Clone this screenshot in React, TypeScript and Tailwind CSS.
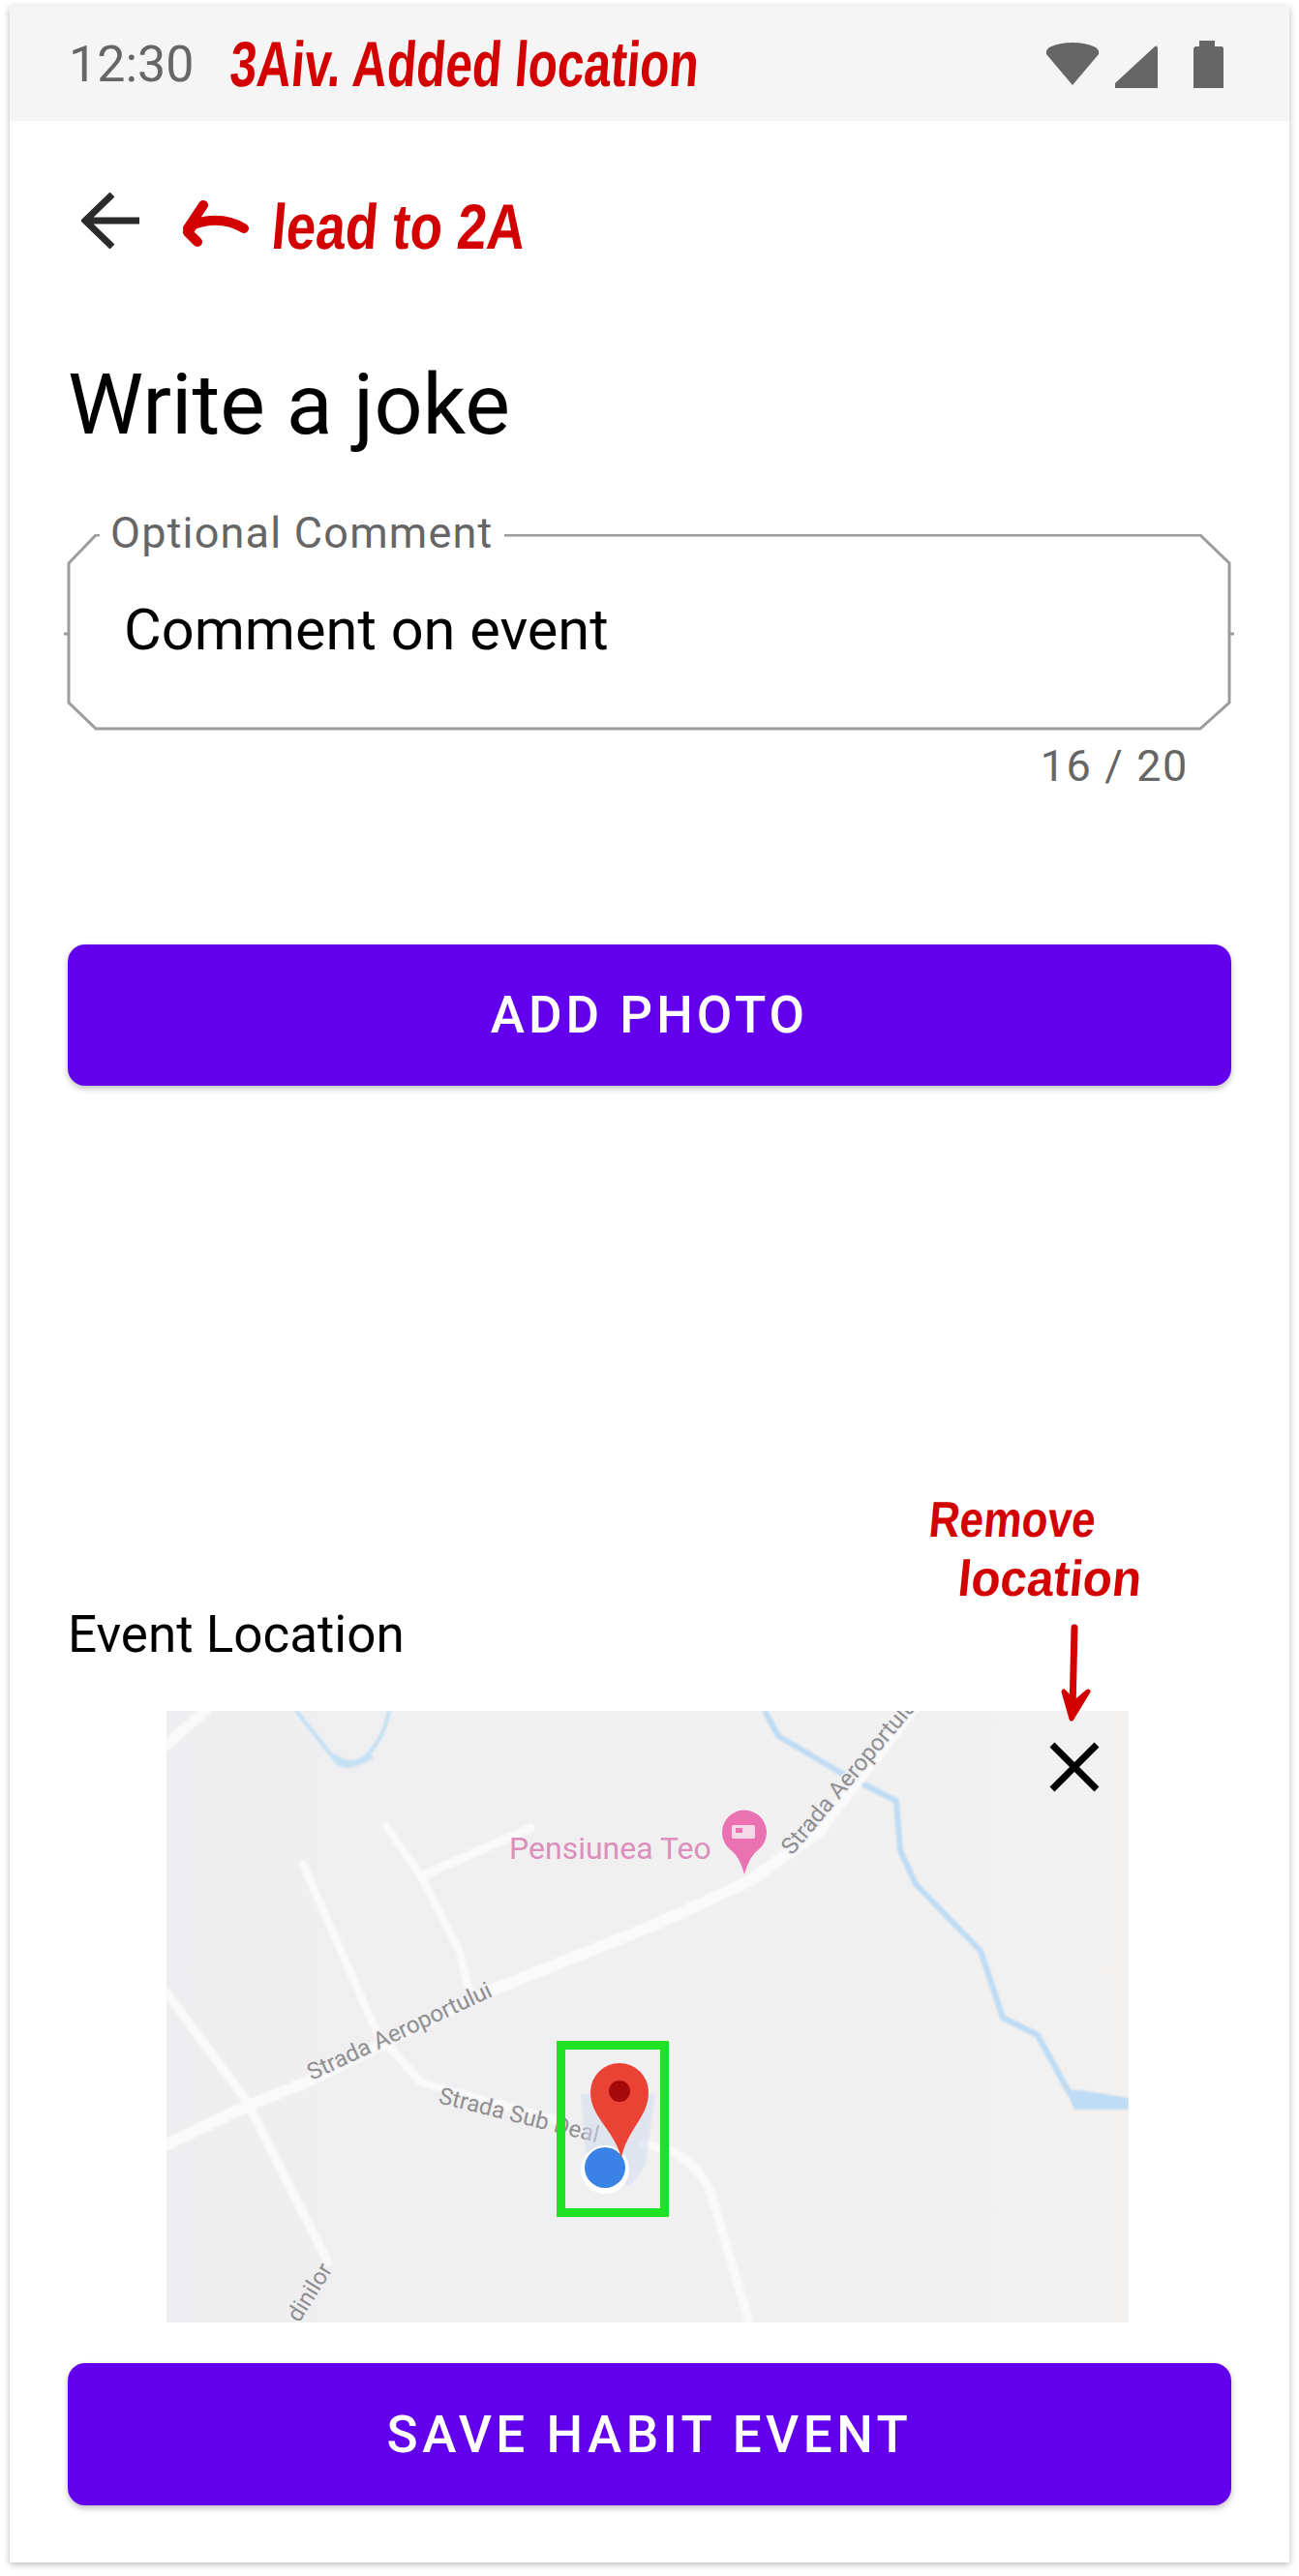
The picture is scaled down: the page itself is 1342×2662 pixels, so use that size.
import React from "react";

function Map() {
  const road = "none";
  return (
    <svg width="994" height="632" viewBox="0 0 994 632" className="block">
      <defs>
        <linearGradient id="mapbg" x1="0" y1="0" x2="1" y2="0">
          <stop offset="0" stopColor="#eeeef0" />
          <stop offset="0.5" stopColor="#f1f0f1" />
          <stop offset="1" stopColor="#f2f1f0" />
        </linearGradient>
        <filter id="soft" x="-5%" y="-5%" width="110%" height="110%">
          <feGaussianBlur stdDeviation="1" />
        </filter>
      </defs>
      <rect width="994" height="632" fill="url(#mapbg)" />
      {/* water */}
      <g filter="url(#soft)">
        <path d="M134 0 L177 54 Q188 60 197 54 Q222 38 230 0" fill={road} stroke="#c4e0f5" strokeWidth="4" />
        <path d="M172 46 Q188 62 212 46" fill={road} stroke="#c4e0f5" strokeWidth="6" />
        <path d="M618 0 L632 26 L695 63 L754 93 L758 144 L774 179 L841 248 L864 317 L900 335 L934 397" fill={road} stroke="#bedcf4" strokeWidth="6" strokeLinejoin="round" />
        <path d="M929 392 L938 412 L994 412 L994 400 L945 392 Z" fill="#bedcf4" />
      </g>
      {/* roads */}
      <g fill={road} stroke="#fafafa" strokeLinecap="round" strokeLinejoin="round" filter="url(#soft)">
        <path d="M-4 450 L84 408 L144 384 L330 291 L509 219 L602 176 L675 124 L775 -8" strokeWidth="12" />
        <path d="M-2 37 L44 -4" strokeWidth="11" />
        <path d="M141 158 L217 332 L263 384 L403 423" strokeWidth="8" />
        <path d="M492 447 L522 455 Q550 470 562 497 L602 632" strokeWidth="9" />
        <path d="M227 119 L263 171 L303 249 L313 291" strokeWidth="8" />
        <path d="M263 171 L376 121" strokeWidth="9" />
        <path d="M0 291 L84 405 L167 570" strokeWidth="9" />
      </g>
      {/* labels */}
      <g fontFamily="Roboto, sans-serif" fill="#8f8f92" fontSize="24">
        <text transform="translate(150 382) rotate(-25)" stroke="#f1f0f1" strokeWidth="3" paintOrder="stroke">Strada Aeroportului</text>
        <text transform="translate(646 150) rotate(-50)" stroke="#f1f0f1" strokeWidth="3" paintOrder="stroke">Strada Aeroportului</text>
        <text transform="translate(280 405) rotate(14)" stroke="#f1f0f1" strokeWidth="3" paintOrder="stroke">Strada Sub Deal</text>
        <text transform="translate(172 577) rotate(-58)" textAnchor="end" stroke="#f1f0f1" strokeWidth="3" paintOrder="stroke">dinilor</text>
      </g>
      <text x="354" y="153" fontFamily="Roboto, sans-serif" fontSize="32" fill="#dc8fbb">Pensiunea Teo</text>
      <path d="M597 169 Q592 150 582 143 A23 23 0 1 1 612 143 Q602 150 597 169 Z" fill="#ea72b2" />
      <rect x="584" y="118" width="24" height="14" rx="2" fill="#f6d9e9" />
      <rect x="588" y="121" width="7" height="5" fill="#ea72b2" />
      {/* marker */}
      <path d="M428 396 L505 396 L495 470 L480 490 L436 490 Z" fill="#d3dcef" opacity="0.55" filter="url(#soft)" />
      <circle cx="453" cy="474" r="25" fill="#ffffff" />
      <circle cx="453" cy="472" r="21" fill="#3b82e6" />
      <path d="M470 462 C462 432 438 420 438 394 A30 30 0 0 1 498 394 C498 420 476 432 470 462 Z" fill="#ea4335" />
      <circle cx="468" cy="393" r="11" fill="#a50a0a" />
      <rect x="407.500" y="345.500" width="107" height="173" fill="none" stroke="#1fe224" strokeWidth="9" />
      {/* remove */}
      <path d="M915 35 L961 81 M961 35 L915 81" stroke="#000" strokeWidth="7" />
    </svg>
  );
}

function Note({ className, children }: { className: string; children: React.ReactNode }) {
  return (
    <span
      className={
        "absolute whitespace-nowrap origin-left font-bold text-[#d20000] font-['Liberation_Sans',sans-serif] " +
        className
      }
    >
      {children}
    </span>
  );
}

export default function App() {
  return (
    <div className="relative w-[1342px] h-[2662px] bg-white font-['Roboto',sans-serif] overflow-hidden">
      <div className="ml-[10px] mt-[6px] w-[1322px] bg-white shadow-[0_2px_7px_rgba(0,0,0,0.28)] flex flex-col">
        {/* status bar */}
        <div className="h-[119px] bg-[#f5f5f5] flex items-start pl-[61px] pr-[68px]">
          <span className="mt-[31px] text-[52px] leading-[60px] text-[#666666]">12:30</span>
          <svg width="184" height="50" viewBox="0 0 184 50" className="ml-auto mt-[36px]" fill="#666666">
            <path d="M1 12 Q0 8 4 5 Q14 0 28 0 Q42 0 52 5 Q56 8 55 12 L28 44 Z" transform="translate(0 2)" />
            <path d="M116 49 L72 49 L72 44 L112 7 Q116 3 116 9 Z" />
            <path d="M159 0 H175 V6 H182 Q184 6 184 9 V49 H153 V9 Q153 6 156 6 H159 Z" />
          </svg>
        </div>

        <div className="flex flex-col pl-[60px] pr-[60px] pb-[59px]">
          {/* toolbar */}
          <div className="mt-[74px] h-[58px] flex">
            <svg width="60" height="58" viewBox="0 0 60 58" className="ml-[14px]" fill="none" stroke="#2b2b2b" strokeWidth="7">
              <path d="M4 29 H60 M32 2 L4 29 L32 56" />
            </svg>
          </div>

          <h1 className="mt-[111px] h-[100px] text-[88px] leading-[100px] font-normal text-black">Write a joke</h1>

          {/* text field */}
          <div className="relative mt-[85px] h-[202px]">
            <svg width="1210" height="204" viewBox="0 0 1210 204" className="absolute left-[-4px] top-[-1px]" fill="none" stroke="#9c9c9c" strokeWidth="3">
              <path d="M33 1 H1174 L1204 30 V174 L1174 201 H33 L5 174 V30 Z" />
              <path d="M0 103 H5 M1204 103 H1209" />
            </svg>
            <span className="absolute left-[33px] top-[-27px] px-[11px] bg-white text-[45px] leading-[50px] tracking-[1.2px] text-[#666666]">
              Optional Comment
            </span>
            <div className="absolute left-[58px] top-[65px] text-[59.5px] leading-[66px] text-black">Comment on event</div>
          </div>
          <div className="mt-[17px] h-[40px] pr-[44px] text-right text-[45px] leading-[40px] tracking-[1.6px] text-[#666666]">16 / 20</div>

          <button className="mt-[164px] h-[146px] pt-[2px] rounded-[18px] bg-[#6200ee] text-white text-[53px] font-medium tracking-[4px] shadow-[0_3px_6px_rgba(0,0,0,0.25)]">
            ADD PHOTO
          </button>

          <div className="mt-[542px] h-[50px] text-[53px] leading-[50px] text-black">Event Location</div>

          <div className="mt-[54px] ml-[102px] w-[994px] h-[632px]">
            <Map />
          </div>

          <button className="mt-[42px] h-[147px] pt-[2px] rounded-[18px] bg-[#6200ee] text-white text-[53px] font-medium tracking-[4.5px] shadow-[0_3px_6px_rgba(0,0,0,0.25)]">
            SAVE HABIT EVENT
          </button>
        </div>
      </div>

      {/* handwritten annotations */}
      <Note className="left-[238px] top-[30px] text-[66px] leading-[72px] scale-x-[0.75] -skew-x-6">3Aiv. Added location</Note>
      <Note className="left-[281px] top-[198px] text-[66px] leading-[72px] scale-x-[0.83] -skew-x-6">lead to 2A</Note>
      <Note className="left-[960px] top-[1540px] text-[52px] leading-[60px] scale-x-[0.85] -skew-x-6">Remove</Note>
      <Note className="left-[990px] top-[1602px] text-[52px] leading-[58px] scale-x-[0.95] -skew-x-6">location</Note>
      <svg width="90" height="60" viewBox="0 0 90 60" className="absolute left-[180px] top-[200px]" fill="none" stroke="#d20000" strokeWidth="10" strokeLinecap="round" strokeLinejoin="round">
        <path d="M72 36 Q48 22 20 32 L14 40 L24 50 M14 36 L30 12" />
      </svg>
      <svg width="50" height="110" viewBox="0 0 50 110" className="absolute left-[1090px] top-[1676px]" fill="none" stroke="#d20000" strokeLinecap="round" strokeLinejoin="round">
        <path d="M20 6 L18 92" strokeWidth="7" />
        <path d="M9 72 L17 100 L34 72 L20 84 Z" fill="#d20000" strokeWidth="5" />
      </svg>
    </div>
  );
}
